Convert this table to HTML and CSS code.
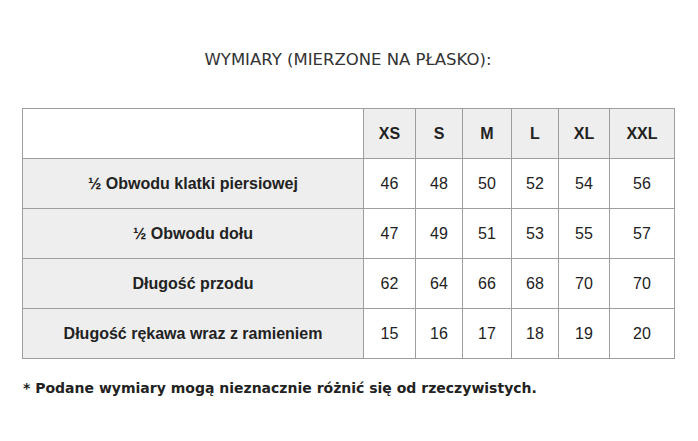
FILE: index.html
```html
<!DOCTYPE html>
<html lang="pl">
<head>
<meta charset="utf-8">
<link rel="stylesheet" href="styles.css">
</head>
<body>
<div class="wrap">
  <h2 class="title">WYMIARY (MIERZONE NA PŁASKO):</h2>
  <table class="sizes">
    <colgroup>
      <col class="c-label"><col class="c-xs"><col class="c-s"><col class="c-m"><col class="c-l"><col class="c-xl"><col class="c-xxl">
    </colgroup>
    <thead>
      <tr><th class="blank"></th><th>XS</th><th>S</th><th>M</th><th>L</th><th>XL</th><th>XXL</th></tr>
    </thead>
    <tbody>
      <tr><th>½ Obwodu klatki piersiowej</th><td>46</td><td>48</td><td>50</td><td>52</td><td>54</td><td>56</td></tr>
      <tr><th>½ Obwodu dołu</th><td>47</td><td>49</td><td>51</td><td>53</td><td>55</td><td>57</td></tr>
      <tr><th>Długość przodu</th><td>62</td><td>64</td><td>66</td><td>68</td><td>70</td><td>70</td></tr>
      <tr><th>Długość rękawa wraz z ramieniem</th><td>15</td><td>16</td><td>17</td><td>18</td><td>19</td><td>20</td></tr>
    </tbody>
  </table>
  <p class="note">* Podane wymiary mogą nieznacznie różnić się od rzeczywistych.</p>
</div>
</body>
</html>
```

FILE: styles.css
```css
html, body {
  margin: 0;
  padding: 0;
  background: #fff;
}
.wrap {
  width: 652px;
  margin: 0 0 0 22px;
  padding-top: 49px;
}
.title {
  margin: 0 0 37px;
  font-family: "DejaVu Sans", Verdana, sans-serif;
  font-weight: normal;
  font-size: 16.5px;
  line-height: 22px;
  color: #333;
  text-align: center;
}
.sizes {
  width: 652px;
  border-collapse: collapse;
  table-layout: fixed;
  font-family: "Liberation Sans", Arial, sans-serif;
  font-size: 16px;
  color: #222;
}
.c-label { width: 341px; }
.c-xs { width: 52px; }
.c-s { width: 47px; }
.c-m { width: 49px; }
.c-l { width: 47px; }
.c-xl { width: 51px; }
.c-xxl { width: 65px; }
.sizes th, .sizes td {
  border: 1px solid #9e9e9e;
  height: 49px;
  padding: 0;
  text-align: center;
  vertical-align: middle;
}
.sizes th {
  background: #eee;
  font-weight: bold;
}
.sizes th.blank {
  background: #fff;
}
.sizes td {
  background: #fff;
  font-weight: normal;
}
.note {
  margin: 19px 0 0 1px;
  font-family: "DejaVu Sans", Verdana, sans-serif;
  font-weight: bold;
  font-size: 14px;
  line-height: 20px;
  color: #222;
}
```
